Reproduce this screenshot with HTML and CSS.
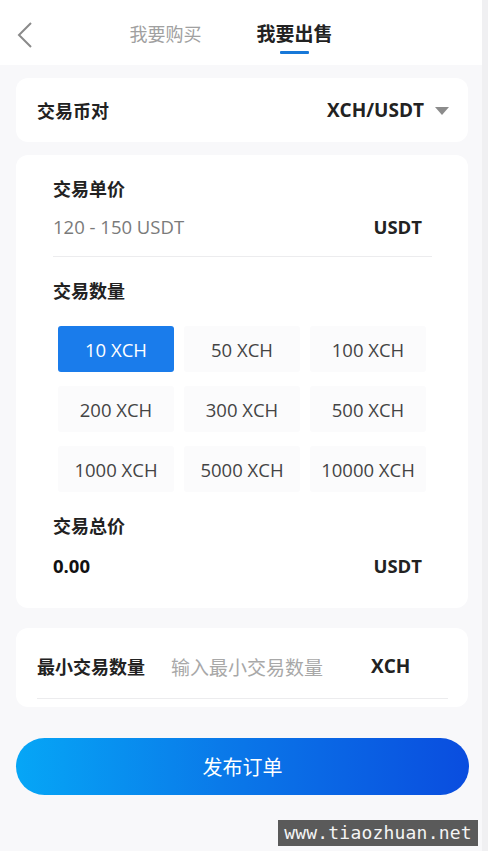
FILE: index.html
```html
<!DOCTYPE html>
<html lang="zh-CN">
<head>
<meta charset="utf-8">
<title>我要出售</title>
<link rel="stylesheet" href="styles.css">
</head>
<body>
<div class="page">
  <header class="topbar">
    <a class="back" aria-label="返回">
      <svg width="18" height="28" viewBox="0 0 18 28"><path d="M15 2 L3 14 L15 26" fill="none" stroke="#8a8a8a" stroke-width="2"/></svg>
    </a>
    <nav class="tabs">
      <span class="tab">我要购买</span>
      <span class="tab active">我要出售</span>
    </nav>
  </header>

  <main class="content">
    <section class="card pair">
      <span class="label">交易币对</span>
      <span class="pair-select">XCH/USDT <i class="caret"></i></span>
    </section>

    <section class="card form">
      <div class="label">交易单价</div>
      <div class="row">
        <span class="muted">120 - 150 USDT</span>
        <span class="unit">USDT</span>
      </div>
      <div class="divider"></div>
      <div class="label gap-top">交易数量</div>
      <div class="grid">
        <button class="chip selected">10 XCH</button>
        <button class="chip">50 XCH</button>
        <button class="chip">100 XCH</button>
        <button class="chip">200 XCH</button>
        <button class="chip">300 XCH</button>
        <button class="chip">500 XCH</button>
        <button class="chip">1000 XCH</button>
        <button class="chip">5000 XCH</button>
        <button class="chip">10000 XCH</button>
      </div>
      <div class="label total-label">交易总价</div>
      <div class="row total-row">
        <span class="total">0.00</span>
        <span class="unit">USDT</span>
      </div>
    </section>

    <section class="card min">
      <div class="min-row">
        <span class="label">最小交易数量</span>
        <span class="placeholder">输入最小交易数量</span>
        <span class="unit">XCH</span>
      </div>
      <div class="divider wide"></div>
    </section>

    <button class="submit">发布订单</button>
  </main>
</div>
<div class="watermark">www.tiaozhuan.net</div>
</body>
</html>
```

FILE: styles.css
```css
* { box-sizing: border-box; }
html, body { margin: 0; padding: 0; }
body {
  width: 488px;
  height: 851px;
  overflow: hidden;
  background: #f0f0f2;
  font-family: "Open Sans", "Noto Sans CJK SC", sans-serif;
  color: #222;
  position: relative;
}
.page {
  width: 482px;
  height: 851px;
  background: #f8f8fa;
}
.topbar {
  height: 65px;
  background: #fff;
  position: relative;
  display: flex;
  justify-content: center;
}
.back {
  position: absolute;
  left: 16px;
  top: 21px;
  display: block;
}
.back svg { display: block; }
.tabs {
  display: flex;
  gap: 55px;
  margin-left: -20px;
}
.tab {
  font-family: "Noto Sans CJK SC", sans-serif;
  font-size: 18px;
  line-height: 26px;
  padding-top: 20px;
  color: #a0a0a0;
  position: relative;
}
.tab.active {
  font-weight: 700;
  font-size: 19px;
  color: #222;
}
.tab.active::after {
  content: "";
  position: absolute;
  left: 50%;
  top: 51px;
  width: 29px;
  height: 3px;
  margin-left: -14px;
  background: #1778d8;
  border-radius: 1px;
}
.content {
  padding: 13px 14px 0 16px;
}
.card {
  background: #fff;
  border-radius: 12px;
  width: 452px;
}
.label {
  font-family: "Noto Sans CJK SC", sans-serif;
  font-size: 18px;
  font-weight: 700;
  line-height: 24px;
  color: #222;
}
.pair {
  height: 64px;
  display: flex;
  align-items: center;
  justify-content: space-between;
  padding: 0 19px 0 21px;
}
.pair-select {
  font-size: 19px;
  font-weight: 700;
  display: flex;
  align-items: center;
  gap: 11px;
  color: #222;
}
.caret {
  width: 0;
  height: 0;
  border-left: 7px solid transparent;
  border-right: 7px solid transparent;
  border-top: 8px solid #8c8c8c;
  margin-top: 1px;
}
.form {
  margin-top: 13px;
  padding: 21px 36px 31px 37px;
}
.row {
  display: flex;
  justify-content: space-between;
  align-items: center;
  height: 24px;
  margin-top: 14px;
  padding-right: 10px;
}
.muted {
  font-size: 18.5px;
  font-weight: 400;
  color: #7a7a7a;
}
.unit {
  font-size: 18.5px;
  font-weight: 700;
  color: #222;
}
.divider {
  height: 1px;
  background: #ececee;
  margin-top: 18px;
}
.gap-top { margin-top: 21px; }
.grid {
  display: grid;
  grid-template-columns: repeat(3, 116px);
  grid-auto-rows: 46px;
  column-gap: 10px;
  row-gap: 14px;
  margin: 24px 0 0 5px;
}
.chip {
  border: 0;
  border-radius: 3px;
  background: #fbfbfc;
  font-family: "Open Sans", "Noto Sans CJK SC", sans-serif;
  font-size: 18.5px;
  font-weight: 400;
  color: #444;
  padding: 0;
}
.chip.selected {
  background: #1a7ceb;
  color: #fff;
}
.total-label { margin-top: 21px; }
.total-row { margin-top: 16px; }
.total {
  font-size: 18.5px;
  font-weight: 700;
  color: #111;
}
.min {
  margin-top: 20px;
  padding: 26px 20px 8px 21px;
}
.min-row {
  display: flex;
  align-items: center;
  height: 24px;
}
.placeholder {
  font-family: "Noto Sans CJK SC", sans-serif;
  font-size: 19px;
  color: #a8a8a8;
  margin-left: 26px;
  width: 200px;
}
.min .unit { font-size: 19px; }
.divider.wide { margin-top: 20px; }
.submit {
  display: block;
  margin-top: 31px;
  width: 453px;
  height: 57px;
  border: 0;
  border-radius: 29px;
  background: linear-gradient(90deg, #06a6f6 0%, #0a7ae9 45%, #0a4ddf 100%);
  color: #fff;
  font-family: "Noto Sans CJK SC", sans-serif;
  font-size: 20px;
  padding: 0;
}
.watermark {
  position: absolute;
  left: 278px;
  top: 820px;
  width: 200px;
  height: 26px;
  background: #5a5a5a;
  color: #f4f4f4;
  font-family: "DejaVu Sans Mono", monospace;
  font-size: 18px;
  line-height: 26px;
  text-align: center;
  letter-spacing: 0.2px;
}
```
